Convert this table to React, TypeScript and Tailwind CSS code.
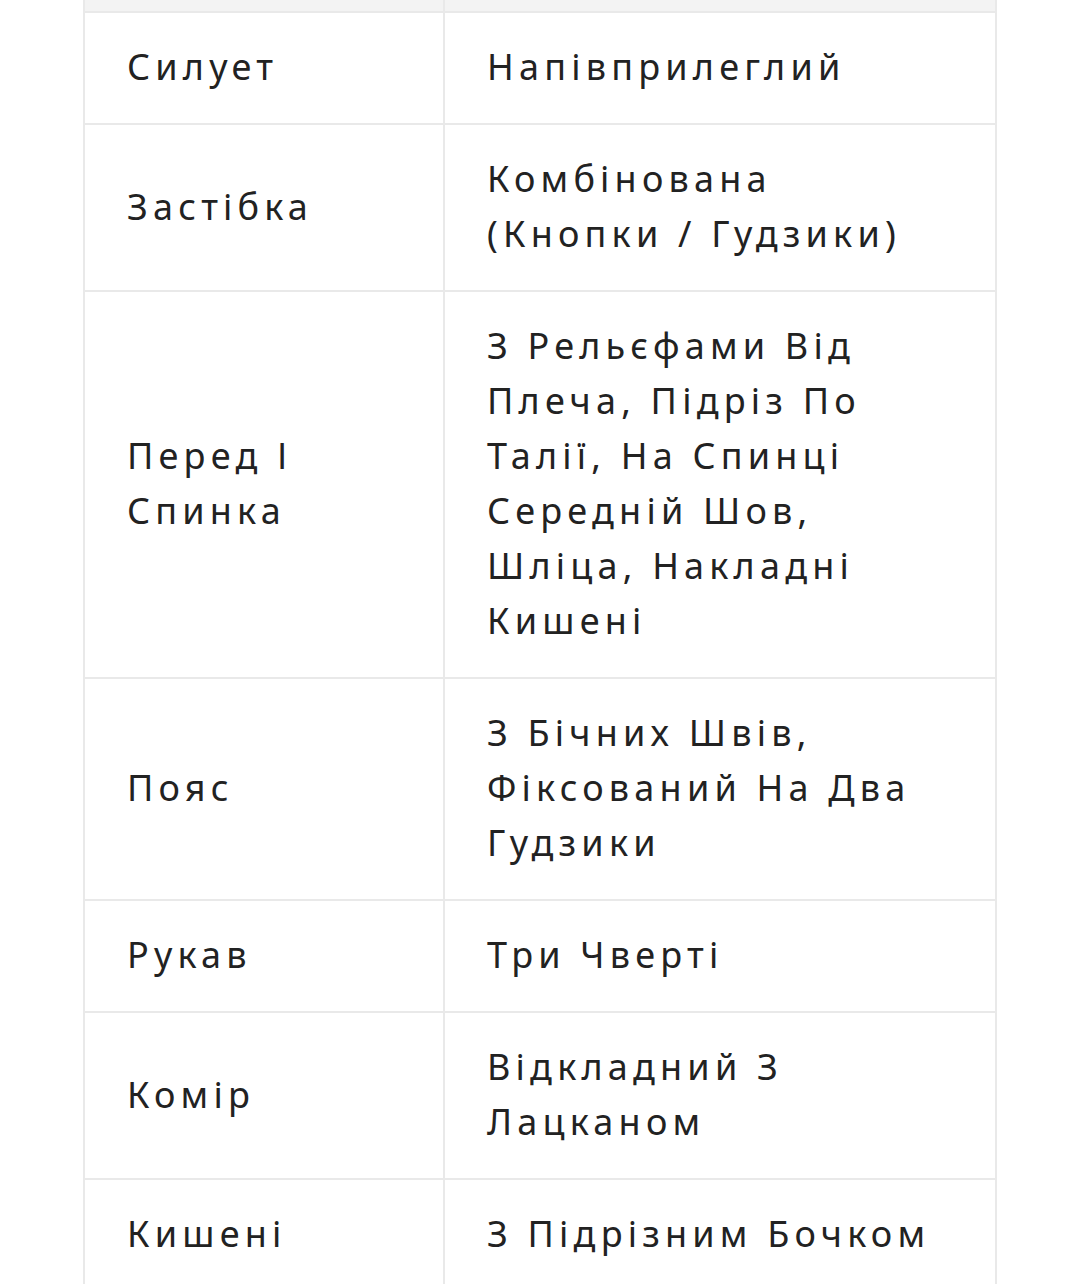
import React from "react";

const rows: [string, string][] = [
  ["Силует", "Напівприлеглий"],
  ["Застібка", "Комбінована (Кнопки / Гудзики)"],
  ["Перед І Спинка", "З Рельєфами Від Плеча, Підріз По Талії, На Спинці Середній Шов, Шліца, Накладні Кишені"],
  ["Пояс", "З Бічних Швів, Фіксований На Два Гудзики"],
  ["Рукав", "Три Чверті"],
  ["Комір", "Відкладний З Лацканом"],
  ["Кишені", "З Підрізним Бочком"],
];

export default function App() {
  return (
    <div
      className="h-[1284px] w-[1080px] overflow-hidden bg-white text-[#222222]"
      style={{ fontFamily: '"Noto Sans", "Open Sans", sans-serif' }}
    >
      <div className="ml-[83px] w-[914px]">
        <table className="w-full table-fixed border-collapse text-[36px] leading-[55px] tracking-[5.2px]">
          <colgroup>
            <col className="w-[360px]" />
            <col />
          </colgroup>
          <tbody>
            <tr className="h-[12px] bg-[#f3f3f3]">
              <td className="border-2 border-t-0 border-[#e9e9e9] p-0" />
              <td className="border-2 border-t-0 border-l-0 border-[#e9e9e9] p-0" />
            </tr>
            {rows.map(([k, v]) => (
              <tr key={k}>
                <td className="border-2 border-[#e9e9e9] pt-[26px] pb-[29px] pl-[42px] pr-[30px] align-middle">{k}</td>
                <td className="border-2 border-[#e9e9e9] pt-[26px] pb-[29px] pl-[42px] pr-[56px] align-middle">{v}</td>
              </tr>
            ))}
          </tbody>
        </table>
      </div>
    </div>
  );
}
